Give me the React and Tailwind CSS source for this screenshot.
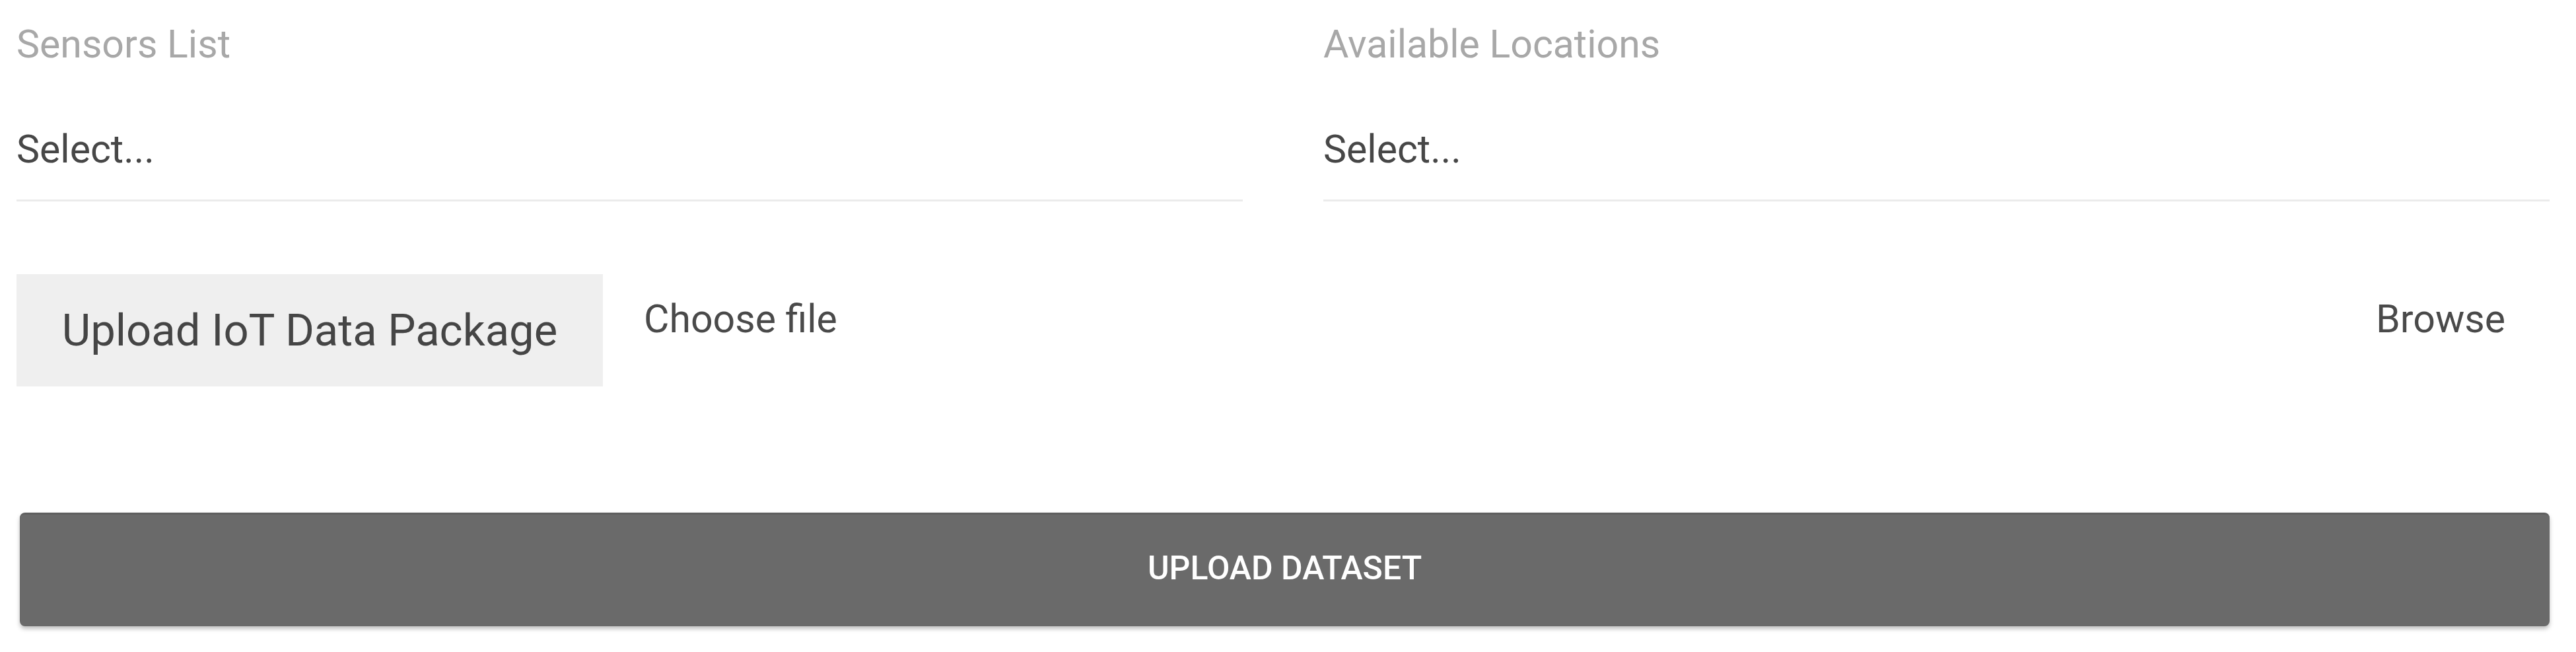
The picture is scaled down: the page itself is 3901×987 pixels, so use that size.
export default function App() {
  return (
    <div
      className="w-[3901px] h-[987px] bg-white pl-[25px] pr-[40px] pt-[37px] overflow-hidden"
      style={{ fontFamily: "Roboto, 'Liberation Sans', sans-serif" }}
    >
      <div className="grid grid-cols-2 gap-x-[122px]">
        {["Sensors List", "Available Locations"].map((label) => (
          <div key={label} className="flex flex-col">
            <div className="text-[59px] leading-[60px] text-[#a8a8a8]">{label}</div>
            <div className="mt-[99px] pb-[46px] border-b-[3px] border-[#ebebeb] text-[59px] leading-[60px] text-[#474747]">
              Select...
            </div>
          </div>
        ))}
      </div>

      <div className="mt-[110px] flex items-start">
        <div className="w-[888px] h-[170px] bg-[#efefef] flex items-center justify-center text-[67px] leading-[68px] text-[#454545]">
          Upload IoT Data Package
        </div>
        <div className="ml-[62px] mt-[38px] text-[59px] leading-[60px] text-[#4a4a4a]">Choose file</div>
        <div className="ml-auto mr-[67px] mt-[38px] text-[59px] leading-[60px] text-[#4a4a4a]">Browse</div>
      </div>

      <div className="mt-[191px] ml-[5px] h-[172px] pb-[8px] rounded-[8px] bg-[#6a6a6a] border-t-[3px] border-[#5f5f5f] shadow-[0_4px_6px_rgba(0,0,0,0.25)] flex items-center justify-center">
        <span className="text-[50px] leading-[50px] font-medium text-white">UPLOAD DATASET</span>
      </div>
    </div>
  );
}
